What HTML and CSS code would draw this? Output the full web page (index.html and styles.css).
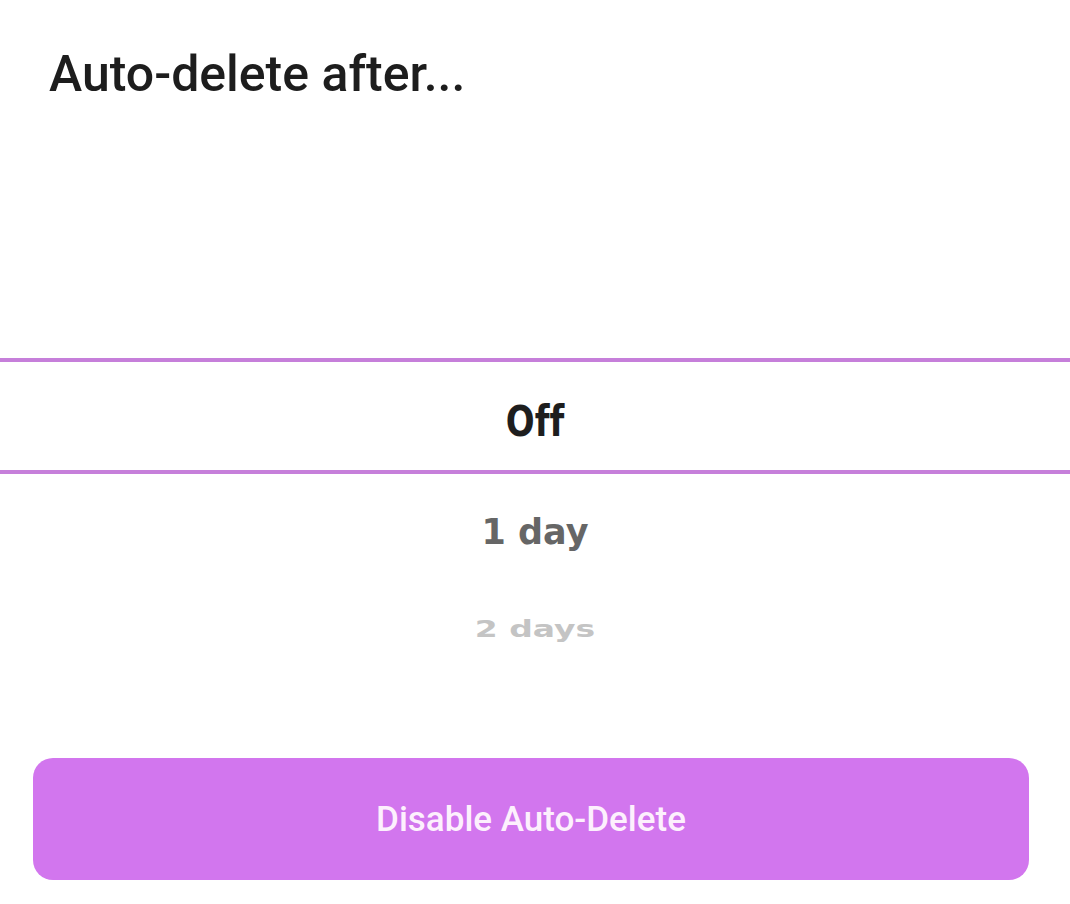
FILE: index.html
```html
<!DOCTYPE html>
<html lang="en">
<head>
  <meta charset="UTF-8" />
  <meta name="viewport" content="width=device-width, initial-scale=1.0"/>
  <title>Auto-delete</title>
  <link rel="stylesheet" href="styles.css">
</head>
<body>

  <div class="sheet">
    <h1 class="sheet-title">Auto-delete after...</h1>

    <!-- Wheel picker -->
    <div class="picker">
      <div class="picker-row selected"><span>Off</span></div>
      <div class="picker-row near"><span>1 day</span></div>
      <div class="picker-row far"><span>2 days</span></div>
    </div>

    <button class="action-btn">Disable Auto-Delete</button>
  </div>

</body>
</html>
```

FILE: styles.css
```css
* {
  box-sizing: border-box;
  margin: 0;
  padding: 0;
}

html, body {
  height: 100%;
  background: #fff;
  font-family: Roboto, "Liberation Sans", sans-serif;
}

.sheet {
  display: flex;
  flex-direction: column;
  height: 100%;
}

.sheet-title {
  margin: 45px 0 0 49px;
  font-size: 50px;
  line-height: 58px;
  font-weight: 500;
  color: #1d1d1d;
}

.picker {
  margin-top: 255px;
  display: flex;
  flex-direction: column;
  font-family: "DejaVu Sans", sans-serif;
  font-weight: bold;
  font-variant-ligatures: none;
  text-align: center;
}

.picker-row {
  display: flex;
  justify-content: center;
  align-items: center;
}

.picker-row span {
  display: inline-block;
}

.picker-row.selected {
  height: 116px;
  border-top: 4px solid #c67fda;
  border-bottom: 4px solid #c67fda;
  padding-top: 10px;
  font-size: 34px;
  color: #1e1e1e;
}

.picker-row.selected span {
  transform: scaleY(1.25);
}

.picker-row.near {
  height: 116px;
  font-size: 35px;
  color: #666;
}

.picker-row.far {
  height: 76px;
  font-size: 33px;
  color: #c4c4c4;
}

.picker-row.far span {
  transform: scaleY(0.7);
}

.action-btn {
  margin: auto 41px 24px 33px;
  height: 122px;
  border: none;
  border-radius: 20px;
  background-color: #d276ee;
  color: #fdf0fd;
  font-family: Roboto, "Liberation Sans", sans-serif;
  font-size: 35px;
  font-weight: 500;
}
```
